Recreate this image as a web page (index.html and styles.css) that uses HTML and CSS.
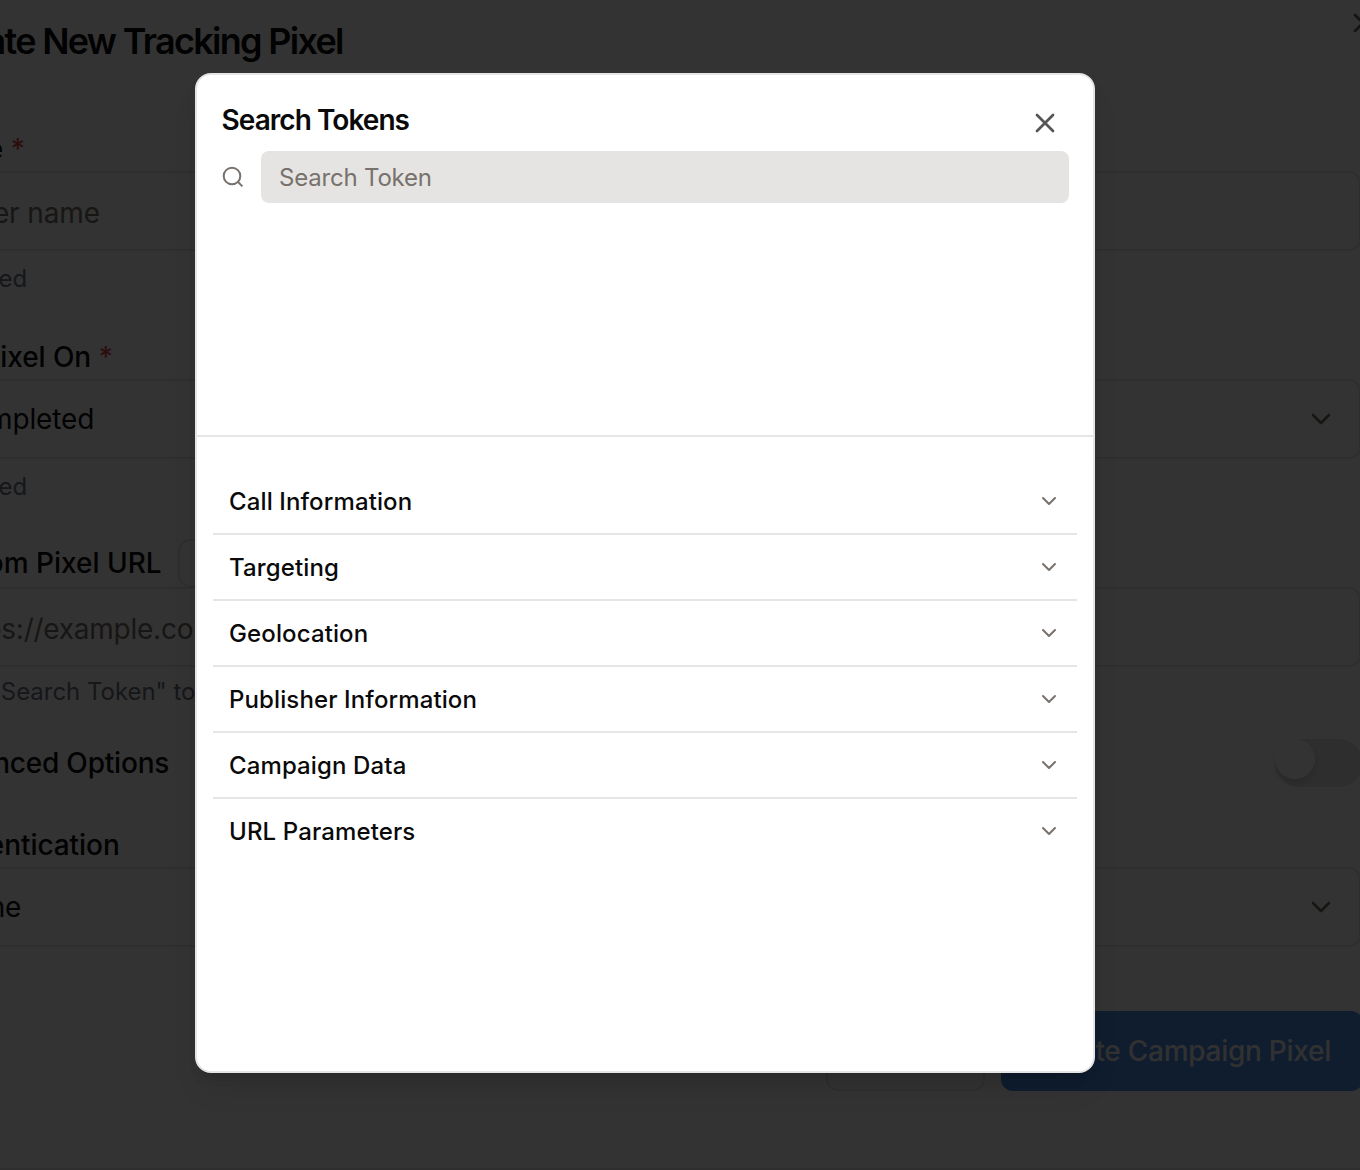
FILE: index.html
```html
<!DOCTYPE html>
<html lang="en">
<head>
<meta charset="utf-8">
<title>Create New Tracking Pixel</title>
<link rel="stylesheet" href="styles.css">
</head>
<body>
<main class="page">
  <header class="page-header">
    <h1 class="page-title">Create New Tracking Pixel</h1>
    <svg class="page-close" viewBox="0 0 24 24"><path d="M4 4l16 16M20 4L4 20"/></svg>
  </header>
  <form class="form">
    <section class="group">
      <div class="label">Name <span class="required">*</span></div>
      <div class="field placeholder">Enter name</div>
      <div class="hint">Required</div>
    </section>
    <section class="group">
      <div class="label">Fire Pixel On <span class="required">*</span></div>
      <div class="field select"><span>Completed</span><svg class="select-icon" viewBox="0 0 20 12"><path d="M2 2l8 8 8-8"/></svg></div>
      <div class="hint">Required</div>
    </section>
    <section class="group url-group">
      <div class="label url-label">Custom Pixel URL<span class="token-button"></span></div>
      <div class="field placeholder url">https://example.com</div>
      <div class="hint">Click "Search Token" to</div>
    </section>
    <div class="option-row">
      <div class="label option-label">Advanced Options</div>
      <div class="toggle"><div class="thumb"></div></div>
    </div>
    <section class="group auth">
      <div class="label auth-label">Authentication</div>
      <div class="field select"><span>None</span><svg class="select-icon" viewBox="0 0 20 12"><path d="M2 2l8 8 8-8"/></svg></div>
    </section>
    <footer class="actions">
      <div class="button"></div>
      <div class="button primary">Create Campaign Pixel</div>
    </footer>
  </form>
</main>
<div class="overlay">
  <div class="modal">
    <div class="modal-top">
      <div class="modal-header">
        <h2 class="modal-title">Search Tokens</h2>
        <svg class="modal-close" viewBox="0 0 24 24"><path d="M4 4l16 16M20 4L4 20"/></svg>
      </div>
      <div class="search">
        <svg class="search-icon" viewBox="0 0 24 24"><circle cx="11" cy="11" r="8.3"/><path d="M16.8 16.8l4.6 4.6"/></svg>
        <div class="search-input">Search Token</div>
      </div>
    </div>
    <div class="categories">
      <div class="category"><span>Call Information</span><svg class="chevron" viewBox="0 0 16 10"><path d="M2 2l6 6 6-6"/></svg></div>
      <div class="category"><span>Targeting</span><svg class="chevron" viewBox="0 0 16 10"><path d="M2 2l6 6 6-6"/></svg></div>
      <div class="category"><span>Geolocation</span><svg class="chevron" viewBox="0 0 16 10"><path d="M2 2l6 6 6-6"/></svg></div>
      <div class="category"><span>Publisher Information</span><svg class="chevron" viewBox="0 0 16 10"><path d="M2 2l6 6 6-6"/></svg></div>
      <div class="category"><span>Campaign Data</span><svg class="chevron" viewBox="0 0 16 10"><path d="M2 2l6 6 6-6"/></svg></div>
      <div class="category"><span>URL Parameters</span><svg class="chevron" viewBox="0 0 16 10"><path d="M2 2l6 6 6-6"/></svg></div>
    </div>
  </div>
</div>
</body>
</html>
```
FILE: styles.css
```css
* { box-sizing: border-box; }
body {
  margin: 0;
  height: 1170px;
  overflow: hidden;
  background: #fff;
  color: #0a0a0a;
  font-family: Inter, "Liberation Sans", sans-serif;
}
svg { fill: none; stroke: currentColor; stroke-linecap: round; stroke-linejoin: round; flex: none; }
.page {
  width: 1436px;
  height: 1170px;
  margin-left: -75px;
  border-bottom: 2px solid #e5e5e5;
}
.page-header { display: flex; justify-content: space-between; height: 127px; }
.page-title { margin: 16px 0 0 4px; font-size: 36px; line-height: 50px; font-weight: 600; letter-spacing: -1.7px; white-space: nowrap; }
.page-close { width: 24px; height: 24px; margin: 11px -14px 0 0; stroke-width: 2.7; color: #666; }
.group { height: 208px; }
.label { height: 44px; line-height: 44px; font-size: 28px; font-weight: 500; letter-spacing: -0.07px; white-space: nowrap; }
.required { color: #e04848; }
.field {
  display: flex;
  align-items: center;
  justify-content: space-between;
  height: 80px;
  padding: 3px 28px 0 24px;
  border: 2px solid #e5e5e5;
  border-radius: 12px;
  font-size: 28px;
  letter-spacing: -0.12px;
}
.placeholder { color: #78716c; }
.url { letter-spacing: -0.25px; }
.select { padding-top: 0; }
.select-icon { width: 20px; height: 12px; stroke-width: 2.7; color: #78716c; }
.hint { height: 56px; line-height: 56px; font-size: 24px; letter-spacing: 0.16px; color: #6b7280; white-space: nowrap; }
.url-group { height: 196px; margin-top: -4px; }
.url-group .hint { height: 50px; padding-left: 2px; line-height: 50px; letter-spacing: -0.03px; }
.url-label { display: flex; gap: 16px; height: 48px; line-height: 49px; letter-spacing: 0; }
.token-button { width: 220px; height: 48px; border: 2px solid #e5e5e5; border-radius: 12px; }
.option-row { display: flex; justify-content: space-between; height: 48px; margin-top: 4px; }
.option-label { height: 48px; line-height: 48px; letter-spacing: -0.2px; }
.toggle { width: 88px; height: 48px; margin-right: -2px; border-radius: 24px; background: #e5e5e5; }
.thumb { width: 40px; height: 40px; border-radius: 50%; background: #fff; box-shadow: 0 4px 6px rgba(0,0,0,.12); }
.auth { height: 124px; margin-top: 36px; }
.actions { display: flex; justify-content: flex-end; gap: 16px; margin: 64px -2px 0 0; }
.button { display: flex; align-items: center; justify-content: flex-end; width: 159px; height: 80px; border: 2px solid #e5e5e5; border-radius: 12px; font-size: 28px; }
.primary { width: 362px; padding: 0 32px 0; border: 0; background: #4b90eb; color: #f5f5f5; font-weight: 500; letter-spacing: -0.27px; white-space: nowrap; }
.overlay {
  position: absolute;
  inset: 0;
  padding: 73px 0 0 195px;
  background: rgba(0,0,0,.8);
}
.modal {
  width: 900px;
  height: 1000px;
  border: 2px solid #e5e5e5;
  border-radius: 16px;
  background: #fff;
  box-shadow: 0 20px 30px -6px rgba(0,0,0,.1), 0 8px 12px -4px rgba(0,0,0,.1);
}
.modal-top { height: 362px; padding: 24px 24px 0; border-bottom: 2px solid #e5e5e5; }
.modal-header { display: flex; justify-content: space-between; height: 52px; }
.modal-title { margin: 0 0 0 0.5px; font-size: 28px; line-height: 42px; font-weight: 600; letter-spacing: -0.95px; }
.modal-close { width: 24px; height: 24px; margin: 12px 12px 0 0; stroke-width: 2.7; color: #555; }
.search { display: flex; align-items: center; gap: 16px; }
.search-icon { width: 24px; height: 24px; stroke-width: 2; stroke-linecap: butt; color: #78716c; }
.search-input { flex: 1; height: 52px; padding: 0 18px; border-radius: 8px; background: #e5e4e2; color: #78716c; font-size: 24px; line-height: 53px; letter-spacing: -0.2px; }
.categories { padding: 32px 16px; }
.category { display: flex; align-items: center; justify-content: space-between; height: 66px; padding: 0 20px 0 16px; border-bottom: 2px solid #e5e5e5; font-size: 24px; font-weight: 500; letter-spacing: 0.12px; }
.category:last-child { border-bottom-color: transparent; }
.chevron { width: 16px; height: 10px; stroke-width: 2; color: #78716c; }
```
